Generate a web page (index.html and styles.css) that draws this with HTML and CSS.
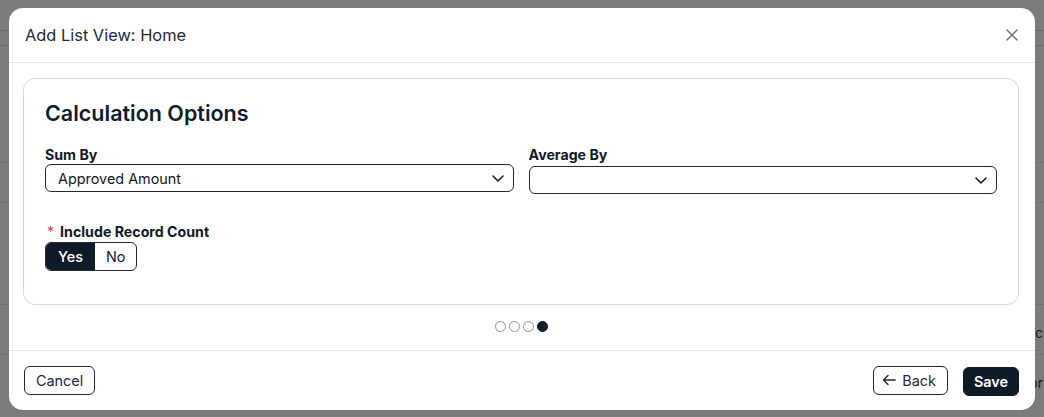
FILE: index.html
```html
<!DOCTYPE html>
<html lang="en">
<head>
<meta charset="utf-8">
<title>Add List View</title>
<link rel="stylesheet" href="styles.css">
</head>
<body>
<div class="page">
  <div class="topbar"></div>
  <div class="subbar"></div>
  <div class="row r1"></div>
  <div class="row r2"></div>
  <div class="row r3"></div>
  <div class="row r4"><span class="cell">tic</span></div>
  <div class="row r5"><span class="cell">or</span></div>
</div>

<div class="overlay">
  <div class="modal">
    <div class="modal-header">
      <h1 class="modal-title">Add List View: Home</h1>
      <button class="close-btn" aria-label="Close">
        <svg width="12" height="12" viewBox="0 0 12 12"><path d="M1 1L11 11M11 1L1 11" stroke="#6b7280" stroke-width="1.5" stroke-linecap="round"/></svg>
      </button>
    </div>
    <div class="modal-body">
      <div class="card">
        <h2 class="card-title">Calculation Options</h2>
        <div class="grid">
          <div class="field">
            <label class="label">Sum By</label>
            <div class="select">
              <span>Approved Amount</span>
              <svg class="chev" width="12" height="7" viewBox="0 0 12 7"><path d="M1 1L6 6L11 1" fill="none" stroke="#111827" stroke-width="1.5" stroke-linecap="round" stroke-linejoin="round"/></svg>
            </div>
          </div>
          <div class="field field-b">
            <label class="label">Average By</label>
            <div class="select">
              <span></span>
              <svg class="chev" width="12" height="7" viewBox="0 0 12 7"><path d="M1 1L6 6L11 1" fill="none" stroke="#111827" stroke-width="1.5" stroke-linecap="round" stroke-linejoin="round"/></svg>
            </div>
          </div>
        </div>
        <div class="field field-count">
          <label class="label"><span class="req">*</span>Include Record Count</label>
          <div class="toggle">
            <span class="seg seg-on">Yes</span>
            <span class="seg seg-off">No</span>
          </div>
        </div>
      </div>
      <div class="dots">
        <span class="dot"></span>
        <span class="dot"></span>
        <span class="dot"></span>
        <span class="dot dot-on"></span>
      </div>
    </div>
    <div class="modal-footer">
      <button class="btn btn-outline">Cancel</button>
      <div class="footer-right">
        <button class="btn btn-outline btn-back">
          <svg width="14" height="12" viewBox="0 0 14 12"><path d="M13 6H1.5M6 1.5L1.5 6L6 10.5" fill="none" stroke="#1f2937" stroke-width="1.5" stroke-linecap="round" stroke-linejoin="round"/></svg>
          Back
        </button>
        <button class="btn btn-dark">Save</button>
      </div>
    </div>
  </div>
</div>
</body>
</html>
```

FILE: styles.css
```css
* { box-sizing: border-box; }
html, body {
  margin: 0;
  padding: 0;
}
body {
  width: 1044px;
  height: 417px;
  overflow: hidden;
  position: relative;
  background: #7b7b7b;
  font-family: Inter, "Liberation Sans", sans-serif;
  color: #111827;
}

/* background page (dimmed) */
.page {
  height: 417px;
  display: flex;
  flex-direction: column;
}
.topbar {
  height: 31px;
  border-bottom: 1px solid #6a6a6a;
}
.subbar {
  height: 15px;
  border-bottom: 1px solid #6a6a6a;
}
.row {
  border-bottom: 1px solid #6f6f6f;
  display: flex;
  justify-content: flex-end;
  align-items: center;
  font-size: 14px;
  color: #1a1a1a;
}
.r1 { height: 117px; }
.r2 { height: 40px; }
.r3 { height: 102px; }
.r4 { height: 50px; padding-top: 6px; }
.r5 { flex: 1; border-bottom: 0; align-items: flex-start; padding-top: 19px; }
.cell {
  margin-right: 1px;
}

/* overlay + modal */
.overlay {
  position: absolute;
  inset: 0;
  padding: 8px 9px 7px 9px;
  display: flex;
}
.modal {
  flex: 1;
  background: #ffffff;
  border-radius: 14px;
  display: flex;
  flex-direction: column;
  overflow: hidden;
}
.modal-header {
  height: 55px;
  border-bottom: 1px solid #e2e5e9;
  display: flex;
  align-items: center;
  justify-content: space-between;
  padding: 0 17px 1px 16px;
}
.modal-title {
  margin: 0;
  font-size: 16.4px;
  font-weight: 400;
  color: #1f2937;
}
.close-btn {
  border: 0;
  background: none;
  padding: 0;
  display: flex;
  cursor: pointer;
}

.modal-body {
  padding: 15px 16px 0 14px;
  height: 287px;
}
.card {
  border: 1px solid #cfd8e3;
  border-radius: 12px;
  padding: 20px 21px 33px 21px;
  height: 227px;
}
.card-title {
  margin: 0 0 18px;
  font-size: 21.5px;
  line-height: 29px;
  font-weight: 600;
  color: #0f1c2c;
}
.grid {
  display: grid;
  grid-template-columns: 1fr 1fr;
  column-gap: 15px;
}
.field {
  display: flex;
  flex-direction: column;
}
.field-b .select { margin-top: 2px; }
.label {
  font-size: 14.2px;
  line-height: 18px;
  font-weight: 700;
  color: #111827;
}
.select {
  height: 28px;
  border: 1px solid #1f2937;
  border-radius: 6px;
  display: flex;
  align-items: center;
  justify-content: space-between;
  padding: 0 9px 0 12px;
  font-size: 14.4px;
  color: #111827;
}
.chev { margin-top: 1px; }

.field-count {
  margin-top: 29px;
}
.req {
  color: #d6336c;
  font-weight: 400;
  margin: 0 6px 0 2px;
}
.toggle {
  display: inline-flex;
  align-self: flex-start;
  height: 29px;
  margin-top: 1px;
  border: 1px solid #1f2937;
  border-radius: 6px;
  overflow: hidden;
  font-size: 14.4px;
}
.seg {
  display: flex;
  align-items: center;
  padding: 0 10px;
  color: #111827;
}
.seg-off { padding: 0 11px; }
.seg-on {
  background: #0f1a27;
  color: #ffffff;
  font-weight: 500;
  width: 49px;
  justify-content: center;
}

.dots {
  display: flex;
  justify-content: center;
  gap: 3px;
  margin-top: 16px;
}
.dot {
  width: 11px;
  height: 11px;
  border-radius: 50%;
  border: 1px solid #8a93a0;
  background: #fff;
}
.dot-on {
  background: #0f1a27;
  border-color: #0f1a27;
}

.modal-footer {
  border-top: 1px solid #e2e5e9;
  flex: 1;
  display: flex;
  align-items: center;
  justify-content: space-between;
  padding: 0 16px 1px 15px;
}
.footer-right {
  display: flex;
  gap: 15px;
  align-items: center;
}
.btn {
  height: 29px;
  border-radius: 6px;
  font-family: Inter, "Liberation Sans", sans-serif;
  font-size: 14.4px;
  display: inline-flex;
  align-items: center;
  gap: 6px;
  padding: 0 11px;
  cursor: pointer;
}
.btn-outline {
  background: #fff;
  border: 1px solid #1f2937;
  color: #1f2937;
}
.btn-back { padding: 0 11px 0 8px; }
.btn-dark {
  background: #0f1a27;
  border: 1px solid #0f1a27;
  color: #fff;
  font-weight: 600;
  margin-top: 2px;
  padding: 0 10px;
}
```
